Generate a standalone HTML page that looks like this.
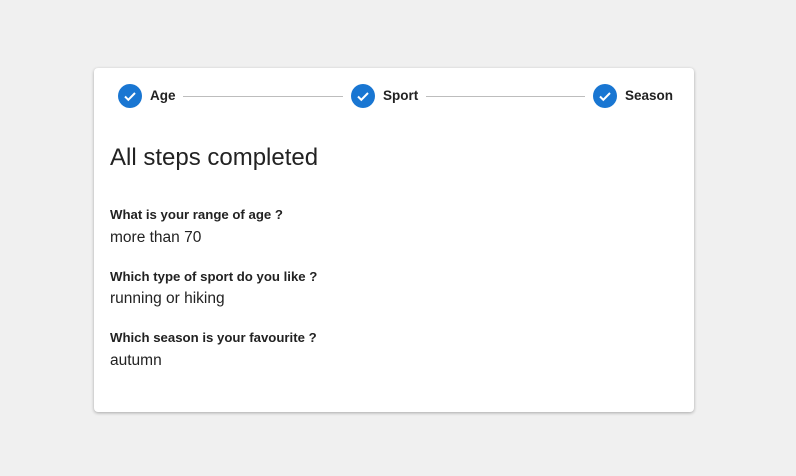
<!DOCTYPE html>
<html><head><style>
body{margin:0;width:796px;height:476px;background:#f0f0f0;font-family:"Liberation Sans",sans-serif;color:#222;position:relative;overflow:hidden}
.card{position:absolute;left:94px;top:68px;width:600px;height:344px;background:#fff;border-radius:4px;box-shadow:0 1px 3px rgba(0,0,0,.3)}
.ic{position:absolute;top:16px;width:24px;height:24px;border-radius:50%;background:#1976d2}
.lb{position:absolute;top:20px;font-size:13.5px;font-weight:bold;color:#222}
.ln{position:absolute;top:28px;height:1px;background:#bdbdbd}
h1{position:absolute;left:16px;top:76px;margin:0;font-size:24px;font-weight:normal}
.q{position:absolute;left:16px;font-size:13.2px;font-weight:bold}
.a{position:absolute;left:16px;font-size:15.5px}
</style></head><body><div class="card">
<div class="ic" style="left:24px"><svg width="24" height="24"><path d="M7 12.5l3.3 3.3L17 9" stroke="#fff" stroke-width="2" fill="none"/></svg></div>
<div class="lb" style="left:56px">Age</div>
<div class="ln" style="left:89px;width:160px"></div>
<div class="ic" style="left:257px"><svg width="24" height="24"><path d="M7 12.5l3.3 3.3L17 9" stroke="#fff" stroke-width="2" fill="none"/></svg></div>
<div class="lb" style="left:289px">Sport</div>
<div class="ln" style="left:332px;width:159px"></div>
<div class="ic" style="left:499px"><svg width="24" height="24"><path d="M7 12.5l3.3 3.3L17 9" stroke="#fff" stroke-width="2" fill="none"/></svg></div>
<div class="lb" style="left:531px">Season</div>
<h1>All steps completed</h1>
<div class="q" style="top:139px">What is your range of age ?</div>
<div class="a" style="top:161px">more than 70</div>
<div class="q" style="top:201px">Which type of sport do you like ?</div>
<div class="a" style="top:222px">running or hiking</div>
<div class="q" style="top:262px">Which season is your favourite ?</div>
<div class="a" style="top:284px">autumn</div>
</div></body></html>
